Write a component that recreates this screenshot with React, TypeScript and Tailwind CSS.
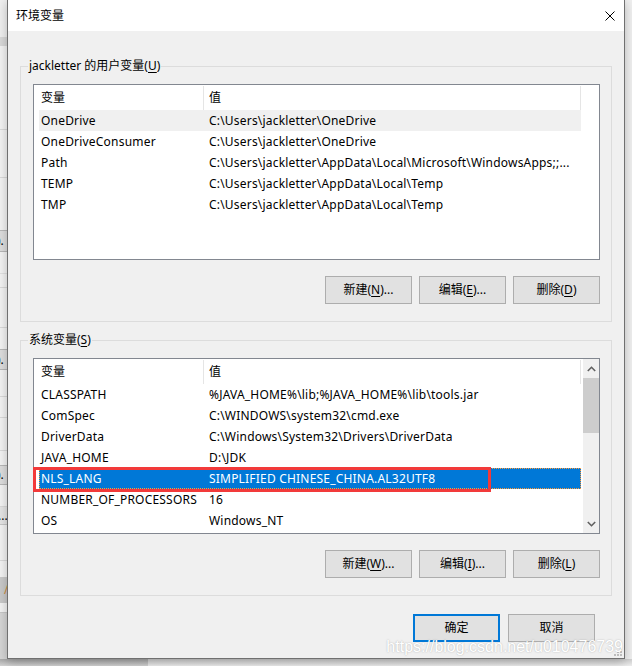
import React from "react";

const userRows: [string, string][] = [
  ["OneDrive", "C:\\Users\\jackletter\\OneDrive"],
  ["OneDriveConsumer", "C:\\Users\\jackletter\\OneDrive"],
  ["Path", "C:\\Users\\jackletter\\AppData\\Local\\Microsoft\\WindowsApps;;..."],
  ["TEMP", "C:\\Users\\jackletter\\AppData\\Local\\Temp"],
  ["TMP", "C:\\Users\\jackletter\\AppData\\Local\\Temp"],
];

const sysRows: [string, string][] = [
  ["CLASSPATH", "%JAVA_HOME%\\lib;%JAVA_HOME%\\lib\\tools.jar"],
  ["ComSpec", "C:\\WINDOWS\\system32\\cmd.exe"],
  ["DriverData", "C:\\Windows\\System32\\Drivers\\DriverData"],
  ["JAVA_HOME", "D:\\JDK"],
  ["NLS_LANG", "SIMPLIFIED CHINESE_CHINA.AL32UTF8"],
  ["NUMBER_OF_PROCESSORS", "16"],
  ["OS", "Windows_NT"],
];

function U({ c }: { c: string }) {
  return <span className="underline decoration-1 underline-offset-[2px]">{c}</span>;
}

function Btn({ children, primary }: { children: React.ReactNode; primary?: boolean }) {
  return (
    <div
      className={
        primary
          ? "flex h-[28px] w-[87px] items-center justify-center border-2 border-[#0078d7] bg-[#e1e1e1] text-[12px] leading-[16px] text-black"
          : "flex h-[28px] w-[87px] items-center justify-center border border-[#adadad] bg-[#e1e1e1] text-[12px] leading-[16px] text-black"
      }
    >
      {children}
    </div>
  );
}

function Chevron({ up }: { up?: boolean }) {
  return (
    <svg width="9" height="6" viewBox="0 0 9 6">
      <polyline
        points={up ? "0.8,5 4.5,1.3 8.2,5" : "0.8,1 4.5,4.7 8.2,1"}
        fill="none"
        stroke="#606060"
        strokeWidth="1.6"
      />
    </svg>
  );
}

function ListBox({
  rows,
  selected,
  hover,
  scroll,
  mark,
}: {
  rows: [string, string][];
  selected?: number;
  hover?: number;
  scroll?: boolean;
  mark?: boolean;
}) {
  return (
    <div className="relative h-[176px] w-[567px] border border-[#828790] bg-white">
      <div className="flex h-full">
        <div className="flex w-[548px] flex-col">
          <div className="flex h-[25px] shrink-0 items-center">
            <div className="flex h-full w-[169px] items-center pl-[7px]">变量</div>
            <div className="h-[24px] w-px self-end bg-[#e5e5e5]" />
            <div className="flex h-full w-[376px] items-center pl-[5px]">值</div>
            <div className="h-[24px] w-px self-end bg-[#e5e5e5]" />
          </div>
          <div className="ml-[5px] flex w-[542px] flex-col tracking-[0.2px]">
            {rows.map((r, i) => (
              <div
                key={r[0]}
                className={
                  i === selected
                    ? "flex h-[21px] items-center whitespace-nowrap bg-[#0078d7] text-white outline-1 -outline-offset-1 outline-dotted outline-[#ff9b3a]"
                    : i === hover
                    ? "flex h-[21px] items-center whitespace-nowrap bg-[#f0f0f0]"
                    : "flex h-[21px] items-center whitespace-nowrap"
                }
              >
                <div className="w-[164px] overflow-hidden pl-[2px]">{r[0]}</div>
                <div className="w-[378px] overflow-hidden pl-[6px]">{r[1]}</div>
              </div>
            ))}
          </div>
        </div>
        {scroll && (
          <div className="ml-[1px] flex h-full w-[16px] flex-col bg-[#f0f0f0]">
            <div className="flex h-[19px] items-center justify-center">
              <Chevron up />
            </div>
            <div className="h-[55px] bg-[#cdcdcd]" />
            <div className="flex-1" />
            <div className="flex h-[18px] items-center justify-center">
              <Chevron />
            </div>
          </div>
        )}
      </div>
      {mark && (
        <div className="absolute left-[-1px] top-[108px] h-[25px] w-[458px] border-[3px] border-[#f23a3a]" />
      )}
    </div>
  );
}

function Group({ label, children }: { label: React.ReactNode; children: React.ReactNode }) {
  return (
    <div className="relative border border-[#dcdcdc] pb-[17px] pl-[12px] pr-[11px] pt-[17px]">
      <div className="absolute left-[7px] top-[-9px] bg-[#f0f0f0] px-[1px] text-[12px] leading-[16px] text-black">
        {label}
      </div>
      {children}
    </div>
  );
}

function LeftStrip() {
  return (
    <div className="flex h-full w-[8px] flex-col bg-[#f4f4f4] text-[12px] leading-[16px] text-black">
      <div className="h-[37px] shrink-0 bg-[#f0f0f0]" />
      <div className="h-[9px] shrink-0 bg-[#d9d9d9]" />
      <div className="h-[84px] shrink-0 border-b border-[#dadada]" />
      <div className="h-[48px] shrink-0 border-b border-[#dadada]" />
      <div className="h-[52px] shrink-0" />
      <div className="flex h-[22px] shrink-0 items-center overflow-hidden border-y border-[#b8b8b8] bg-[#dedede]">
        <span className="-ml-[3px]">).</span>
      </div>
      <div className="h-[22px] shrink-0 border-b border-[#e2e2e2]" />
      <div className="h-[14px] shrink-0 border-b border-[#dadada]" />
      <div className="h-[40px] shrink-0 border-b border-[#dadada]" />
      <div className="h-[21px] shrink-0" />
      <div className="flex h-[21px] shrink-0 items-center overflow-hidden border-y border-[#b8b8b8] bg-[#dedede]">
        <span className="-ml-[3px]">).</span>
      </div>
      <div className="h-[27px] shrink-0 border-b border-[#dadada]" />
      <div className="h-[21px] shrink-0 border-b border-[#dadada]" />
      <div className="h-[33px] shrink-0 border-b border-[#dadada]" />
      <div className="h-[14px] shrink-0" />
      <div className="flex h-[20px] shrink-0 items-center overflow-hidden border-y border-[#b8b8b8] bg-[#dedede]">
        <span className="-ml-[3px]">).</span>
      </div>
      <div className="h-[22px] shrink-0 border-b border-[#dadada]" />
      <div className="flex h-[18px] shrink-0 items-center overflow-hidden border-b border-[#c8c8c8] bg-[#e6e6e6]">
        <span className="-ml-[2px]">...</span>
      </div>
      <div className="h-[36px] shrink-0 border-b border-[#dadada]" />
      <div className="h-[16px] shrink-0" />
      <div className="flex h-[26px] shrink-0 items-center overflow-hidden bg-[#cacaca] pl-[4px] text-[#d08a3a]">/</div>
      <div className="h-[10px] shrink-0 border-b border-[#c8c8c8]" />
      <div className="flex-1 bg-[#d6d6d6]" />
    </div>
  );
}

export default function App() {
  return (
    <div className="relative h-[666px] w-[632px] overflow-hidden bg-[#f0f0f0] font-['Noto_Sans','Noto_Sans_CJK_SC',sans-serif] text-[12px] leading-[16px] text-black">
      {/* background desktop / windows behind the dialog */}
      <div className="flex h-full flex-col">
        <div className="flex min-h-0 flex-1">
          <LeftStrip />
          <div className="flex-1 bg-[#f0f0f0]" />
        </div>
        <div className="flex h-[7px] shrink-0">
          <div className="w-[148px] bg-gradient-to-b from-[#a9a9a9] to-[#d4d4d4]" />
          <div className="flex-1 bg-gradient-to-b from-[#d0d0d0] to-[#eeeeee]" />
        </div>
      </div>

      {/* dialog window */}
      <div className="absolute left-[7px] top-[-1px] flex h-[660px] w-[618px] flex-col border border-[#707070] bg-[#f0f0f0] shadow-[0_3px_10px_rgba(0,0,0,0.25)]">
        <div className="flex h-[31px] shrink-0 items-center justify-between bg-white pl-[8px] pr-[9px]">
          <span className="text-[12px] text-black">环境变量</span>
          <svg width="10" height="10" viewBox="0 0 10 10">
            <path d="M0.5 0.5 L9.5 9.5 M9.5 0.5 L0.5 9.5" stroke="#000" strokeWidth="1" />
          </svg>
        </div>
        <div className="flex flex-1 flex-col px-[12px] pb-[16px] pt-[35px]">
          <Group
            label={
              <>
                jackletter 的用户变量(<U c="U" />)
              </>
            }
          >
            <ListBox rows={userRows} hover={0} />
            <div className="mt-[16px] flex justify-end gap-[7px]">
              <Btn>
                新建(<U c="N" />)...
              </Btn>
              <Btn>
                编辑(<U c="E" />)...
              </Btn>
              <Btn>
                删除(<U c="D" />)
              </Btn>
            </div>
          </Group>
          <div className="mt-[18px]">
            <Group
              label={
                <>
                  系统变量(<U c="S" />)
                </>
              }
            >
              <ListBox rows={sysRows} selected={4} scroll mark />
              <div className="mt-[16px] flex justify-end gap-[7px]">
                <Btn>
                  新建(<U c="W" />)...
                </Btn>
                <Btn>
                  编辑(<U c="I" />)...
                </Btn>
                <Btn>
                  删除(<U c="L" />)
                </Btn>
              </div>
            </Group>
          </div>
          <div className="mt-[18px] flex justify-end gap-[8px] pr-[17px]">
            <Btn primary>确定</Btn>
            <Btn>取消</Btn>
          </div>
        </div>
        <svg className="absolute bottom-[1px] right-[1px]" width="10" height="10" viewBox="0 0 10 10">
          <rect x="7" y="1" width="2" height="2" fill="#bdbdbd" />
          <rect x="4" y="4" width="2" height="2" fill="#bdbdbd" />
          <rect x="7" y="4" width="2" height="2" fill="#bdbdbd" />
          <rect x="1" y="7" width="2" height="2" fill="#bdbdbd" />
          <rect x="4" y="7" width="2" height="2" fill="#bdbdbd" />
          <rect x="7" y="7" width="2" height="2" fill="#bdbdbd" />
        </svg>
      </div>

      {/* watermark */}
      <div className="absolute right-[9px] top-[638px] font-['Liberation_Sans',Arial,sans-serif] text-[16px] leading-[18px] text-white [text-shadow:0_0_1.5px_rgba(110,110,110,0.55)]">
        https://blog.csdn.net/u010476739
      </div>
    </div>
  );
}
